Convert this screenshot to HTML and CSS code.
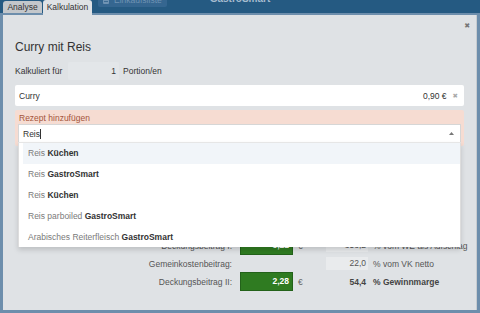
FILE: index.html
```html
<!DOCTYPE html>
<html lang="de">
<head>
  <meta charset="UTF-8">
  <title>Kalkulation | GastroSmart</title>
  <link rel="stylesheet" href="styles.css">
</head>
<body>
  <div class="topbar">
    <div class="tabs">
      <span class="tab tab-analyse">Analyse</span>
      <span class="tab tab-kalk active">Kalkulation</span>
    </div>
    <span class="shop-btn">
      <svg class="shop-icon" width="6" height="7" viewBox="0 0 6 7"><rect x="0" y="0" width="6" height="7" rx="1" fill="#6f93b3"/><rect x="1" y="2" width="4" height="1" fill="#3d6c93"/><rect x="1" y="4" width="4" height="1" fill="#3d6c93"/></svg>
      Einkaufsliste
    </span>
    <span class="brand">GastroSmart</span>
  </div>

  <div class="modal">
    <span class="modal-close">✖</span>
    <h1>Curry mit Reis</h1>

    <div class="portion-row">
      <span class="portion-label">Kalkuliert für</span>
      <span class="portion-input">1</span>
      <span class="portion-unit">Portion/en</span>
    </div>

    <div class="recipe-item">
      <span class="recipe-name">Curry</span>
      <span class="recipe-price">0,90 €</span>
      <span class="recipe-remove">✖</span>
    </div>

    <div class="add-recipe">
      <div class="add-label">Rezept hinzufügen</div>
      <div class="select-box">
        <span class="select-text">Reis<span class="caret"></span></span>
        <svg class="select-arrow" width="5" height="3" viewBox="0 0 5 3"><polygon points="0,3 2.5,0 5,3" fill="#777"/></svg>
        <ul class="results">
          <li class="hl">Reis <b>Küchen</b></li>
          <li>Reis <b>GastroSmart</b></li>
          <li>Reis <b>Küchen</b></li>
          <li>Reis parboiled <b>GastroSmart</b></li>
          <li>Arabisches Reiterfleisch <b>GastroSmart</b></li>
        </ul>
      </div>
    </div>

    <div class="calc">
      <div class="calc-row">
        <span class="calc-label">Verkaufspreis brutto:</span>
        <span class="num-box">4,50</span>
        <span class="cur">€</span>
        <span class="pct-box">7,0</span>
        <span class="unit">% MwSt.</span>
      </div>
      <div class="calc-row">
        <span class="calc-label">Verkaufspreis netto:</span>
        <span class="num-box">4,21</span>
        <span class="cur">€</span>
        <span></span>
        <span></span>
      </div>
      <div class="calc-row">
        <span class="calc-label">Wareneinsatz:</span>
        <span class="num-box">0,90</span>
        <span class="cur">€</span>
        <span class="pct-box">21,4</span>
        <span class="unit">% vom VK netto</span>
      </div>
      <div class="calc-row">
        <span class="calc-label">Rohaufschlag:</span>
        <span class="num-box">3,31</span>
        <span class="cur">€</span>
        <span></span>
        <span></span>
      </div>
      <div class="calc-row">
        <span class="calc-label">Deckungsbeitrag I:</span>
        <span class="green-box">3,21</span>
        <span class="cur">€</span>
        <span class="pct-box">353,2</span>
        <span class="unit">% vom WE als Aufschlag</span>
      </div>
      <div class="calc-row">
        <span class="calc-label">Gemeinkostenbeitrag:</span>
        <span></span>
        <span></span>
        <span class="pct-box">22,0</span>
        <span class="unit">% vom VK netto</span>
      </div>
      <div class="calc-row">
        <span class="calc-label">Deckungsbeitrag II:</span>
        <span class="green-box">2,28</span>
        <span class="cur">€</span>
        <span class="pct-plain">54,4</span>
        <span class="unit bold">% Gewinnmarge</span>
      </div>
    </div>
  </div>
</body>
</html>
```

FILE: styles.css
```css
* { box-sizing: border-box; }
html, body { margin: 0; height: 100%; }
body {
  font-family: "Liberation Sans", Arial, sans-serif;
  font-size: 8.5px;
  color: #333;
  background: #6d8eac;
  overflow: hidden;
  display: flex;
  flex-direction: column;
}

/* top navigation */
.topbar {
  height: 13px;
  flex: none;
  background: #255a82;
  display: flex;
  align-items: flex-start;
  position: relative;
  z-index: 2;
}
.tabs {
  display: flex;
  align-items: flex-start;
  gap: 1px;
  margin-left: 3px;
}
.tab {
  margin-top: 1px;
  height: 12px;
  line-height: 12px;
  text-align: center;
  background: #c3c7cb;
  border-radius: 3px 3px 0 0;
  white-space: nowrap;
}
.tab-analyse { width: 39px; }
.tab-kalk { width: 49px; }
.tab.active {
  margin-top: 0;
  height: 15px;
  line-height: 14px;
  background: #dfe2e5;
}
.shop-btn {
  margin: -6px 0 0 6px;
  height: 13px;
  line-height: 13px;
  padding: 0 5px;
  background: #356690;
  color: #6f93b3;
  border-radius: 0 0 2px 2px;
  display: flex;
  align-items: center;
  gap: 5px;
}
.brand {
  margin: -8px 0 0 43px;
  line-height: 14px;
  font-size: 10px;
  font-weight: bold;
  color: #a5bccf;
}

/* dialog */
.modal {
  flex: 1;
  margin: 2px 3px 3px;
  padding: 25px 12px 0;
  background: #dfe2e5;
  border-right: 1px solid #c8ccd0;
  position: relative;
}
.modal-close {
  position: absolute;
  top: 7px;
  right: 6px;
  font-family: "DejaVu Sans", sans-serif;
  font-size: 7px;
  color: #777;
}
h1 {
  margin: 0;
  font-size: 12px;
  line-height: 14px;
  font-weight: normal;
}

.portion-row {
  margin-top: 8px;
  height: 18px;
  display: flex;
  align-items: center;
}
.portion-label { width: 53px; }
.portion-input {
  width: 51px;
  height: 18px;
  line-height: 18px;
  text-align: right;
  padding-right: 3px;
  background: #e3e6e9;
  border-radius: 2px;
}
.portion-unit { margin-left: 4px; }

.recipe-item {
  margin-top: 5px;
  height: 21px;
  background: #fff;
  border-radius: 2px;
  display: flex;
  align-items: center;
  padding: 0 6px 0 4px;
}
.recipe-name { flex: 1; }
.recipe-remove {
  margin-left: 6px;
  font-family: "DejaVu Sans", sans-serif;
  font-size: 6.5px;
  color: #aaa;
}

.add-recipe {
  margin-top: 4px;
  padding: 2px 3px 3px;
  background: #f6dcd2;
  border-radius: 2px;
}
.add-label {
  line-height: 12px;
  padding-left: 1px;
  color: #a4543b;
}
.select-box {
  position: relative;
  height: 19px;
  background: #fff;
  border: 1px solid #d6d6d6;
  border-bottom-color: #e0e0e0;
  display: flex;
  align-items: center;
  padding: 0 6px 0 4px;
}
.select-text { flex: 1; display: flex; align-items: center; }
.caret {
  display: inline-block;
  width: 1px;
  height: 10px;
  background: #333;
}
.results {
  position: absolute;
  top: 100%;
  left: -1px;
  right: -1px;
  z-index: 3;
  height: 105px;
  overflow: hidden;
  margin: 0;
  padding: 0 0 0 4px;
  list-style: none;
  background: #fff;
  border: 1px solid #ddd;
  border-top-color: #e6e6e6;
  border-bottom: none;
  box-shadow: 0 3px 5px rgba(0, 0, 0, 0.15);
}
.results li {
  height: 21px;
  line-height: 20px;
  padding: 0 5px;
  color: #7a7a7a;
}
.results li b { color: #333; }
.results li.hl { background: #f1f5f9; }

/* calculation table */
.calc { margin-top: 14px; }
.calc-row {
  display: grid;
  grid-template-columns: 225px 53px 33px 42px auto;
  align-items: center;
  min-height: 17px;
  color: #555;
}
.calc-row:has(.green-box), .calc-row:has(.num-box) { height: 19px; }
.calc-label { text-align: right; padding-right: 8px; }
.num-box, .green-box {
  height: 19px;
  line-height: 17px;
  text-align: right;
  padding-right: 3px;
  border: 1px solid #c6c9cc;
  background: #f3f4f5;
}
.green-box {
  background: #2f7b21;
  border-color: #23621a;
  color: #fff;
  font-weight: bold;
}
.cur { padding-left: 5px; color: #666; }
.pct-box {
  height: 13px;
  line-height: 13px;
  text-align: right;
  padding-right: 2px;
  background: #e9ebed;
}
.pct-plain {
  text-align: right;
  padding-right: 2px;
  font-weight: bold;
  color: #444;
}
.unit { padding-left: 5px; white-space: nowrap; }
.unit.bold { font-weight: bold; color: #444; }
```
